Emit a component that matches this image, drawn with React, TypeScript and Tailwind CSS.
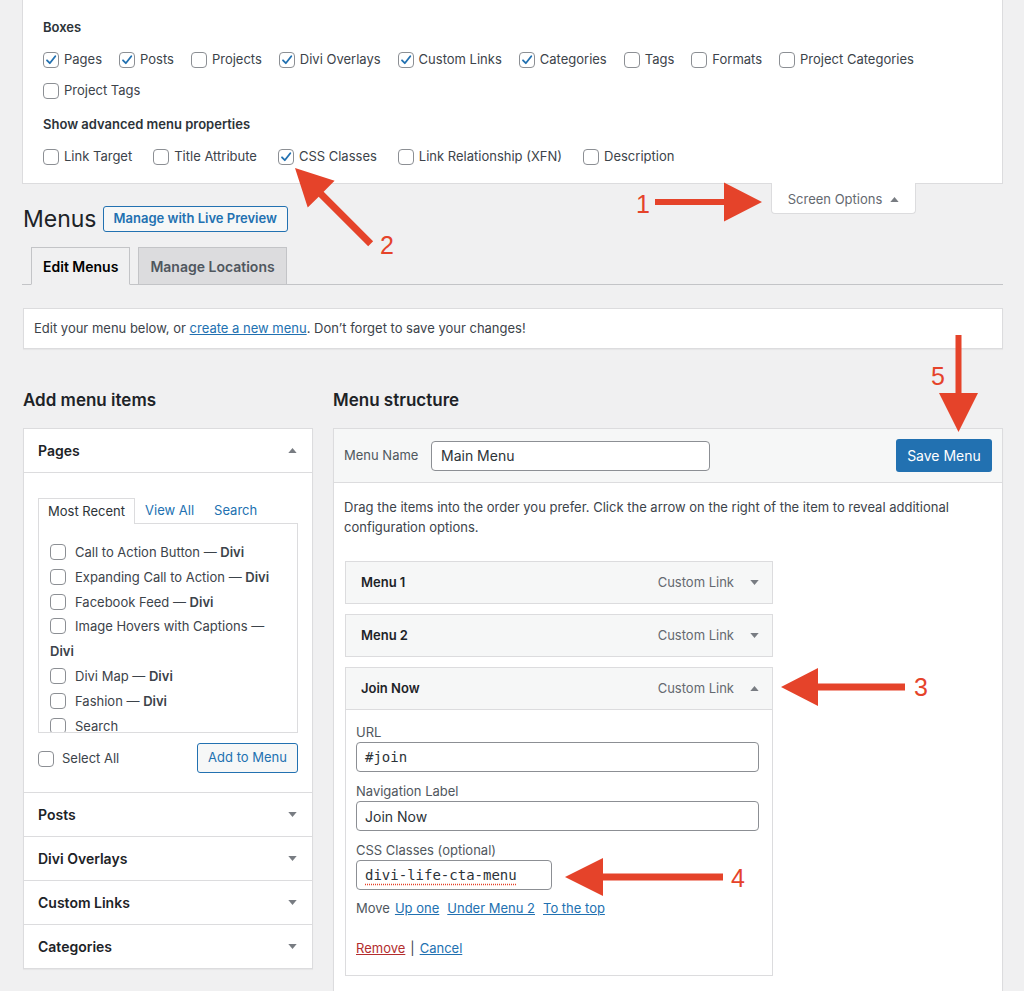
import React from 'react';

const boxesRow1: [string, boolean][] = [
  ['Pages', true],
  ['Posts', true],
  ['Projects', false],
  ['Divi Overlays', true],
  ['Custom Links', true],
  ['Categories', true],
  ['Tags', false],
  ['Formats', false],
  ['Project Categories', false],
];

const advanced: [string, boolean][] = [
  ['Link Target', false],
  ['Title Attribute', false],
  ['CSS Classes', true],
  ['Link Relationship (XFN)', false],
  ['Description', false],
];

const otherSections = ['Posts', 'Divi Overlays', 'Custom Links', 'Categories'];

function Check({ on = false }: { on?: boolean }) {
  return (
    <span className="inline-flex h-4 w-4 shrink-0 items-center justify-center rounded-[4px] border border-[#8c8f94] bg-white align-middle">
      {on && (
        <svg viewBox="0 0 14 14" className="h-[14px] w-[14px]">
          <path d="M3 7.3 5.8 10.2 11.3 3.2" fill="none" stroke="#2271b1" strokeWidth="1.8" strokeLinecap="round" strokeLinejoin="round" />
        </svg>
      )}
    </span>
  );
}

function Caret({ up = false }: { up?: boolean }) {
  return (
    <svg viewBox="0 0 10 6" className="h-[5px] w-[9px] shrink-0">
      <path d={up ? 'M0 6 5 0 10 6Z' : 'M0 0 5 6 10 0Z'} fill="#787c82" />
    </svg>
  );
}

function Option({ label, on }: { label: string; on: boolean }) {
  return (
    <label className="flex items-center gap-[5px] text-[13px] text-[#3c434a]">
      <Check on={on} />
      {label}
    </label>
  );
}

function MenuItemBar({ title, open = false }: { title: string; open?: boolean }) {
  return (
    <div className="flex h-[43px] items-center border border-[#dcdcde] bg-[#f6f7f7] pl-[15px] pr-[13px]">
      <span className="text-[13px] font-semibold text-[#1d2327]">{title}</span>
      <span className="ml-auto mr-[16px] text-[13px] text-[#646970]">Custom Link</span>
      <Caret up={open} />
    </div>
  );
}

function Annotations() {
  const red = '#e5432a';
  return (
    <>
      <svg className="pointer-events-none absolute left-0 top-0" width="1024" height="991" viewBox="0 0 1024 991">
        <g fill={red}>
          {/* 1 */}
          <polygon points="762,202 724,182.5 724,199 655,199 655,205 724,205 724,221.5" />
          {/* 2 */}
          <g transform="translate(295 168) rotate(45)">
            <polygon points="0,0 37,-19 37,-3.5 107,-3.5 107,3.5 37,3.5 37,19" />
          </g>
          {/* 5 */}
          <polygon points="958.5,432 939,393 955.5,393 955.5,335 961.5,335 961.5,393 978,393" />
          {/* 3 */}
          <polygon points="781,687 818,668 818,683.5 905,683.5 905,690.5 818,690.5 818,706" />
          {/* 4 */}
          <polygon points="565,877 603,858 603,873.5 723,873.5 723,880.5 603,880.5 603,896" />
        </g>
      </svg>
      <span className="pointer-events-none absolute left-[636px] top-[192px] text-[25px] leading-none text-[#e5432a] [font-family:'Liberation_Sans',Arial,sans-serif]">1</span>
      <span className="pointer-events-none absolute left-[380px] top-[233px] text-[25px] leading-none text-[#e5432a] [font-family:'Liberation_Sans',Arial,sans-serif]">2</span>
      <span className="pointer-events-none absolute left-[931px] top-[364px] text-[25px] leading-none text-[#e5432a] [font-family:'Liberation_Sans',Arial,sans-serif]">5</span>
      <span className="pointer-events-none absolute left-[914px] top-[675px] text-[25px] leading-none text-[#e5432a] [font-family:'Liberation_Sans',Arial,sans-serif]">3</span>
      <span className="pointer-events-none absolute left-[731px] top-[866px] text-[25px] leading-none text-[#e5432a] [font-family:'Liberation_Sans',Arial,sans-serif]">4</span>
    </>
  );
}

export default function App() {
  return (
    <div className="relative min-h-[991px] overflow-hidden bg-[#f0f0f1] text-[#3c434a] [font-family:Inter,'Liberation_Sans',sans-serif]">
      <div className="ml-[22px] w-[981px] pb-[40px]">
        {/* Screen options panel */}
        <div className="h-[184px] border-x border-b border-[#dcdcde] bg-white pl-[20px] pt-[17px]">
          <div className="h-[20px] text-[13px] font-semibold leading-[20px] text-[#2c3338]">Boxes</div>
          <div className="mt-[13px] flex h-[20px] gap-x-[17px]">
            {boxesRow1.map(([l, on]) => (
              <Option key={l} label={l} on={on} />
            ))}
          </div>
          <div className="mt-[11px] flex h-[20px]">
            <Option label="Project Tags" on={false} />
          </div>
          <div className="mt-[13px] h-[20px] text-[13px] font-semibold leading-[20px] text-[#2c3338]">
            Show advanced menu properties
          </div>
          <div className="mt-[13px] flex h-[20px] gap-x-[21px]">
            {advanced.map(([l, on]) => (
              <Option key={l} label={l} on={on} />
            ))}
          </div>
        </div>

        {/* Screen options tab */}
        <div className="flex justify-end pr-[87px]">
          <div className="-mt-px flex h-[31px] w-[145px] items-center justify-center gap-[8px] rounded-b-[4px] border-x border-b border-[#dcdcde] bg-white pt-[3px] text-[13px] text-[#646970]">
            Screen Options
            <Caret up />
          </div>
        </div>

        {/* Heading */}
        <div className="-mt-[8px] flex h-[26px] items-center pl-px">
          <h1 className="text-[23px] font-normal leading-[26px] text-[#1d2327]">Menus</h1>
          <div className="ml-[6px] flex h-[26px] items-center rounded-[3px] border border-[#2271b1] bg-[#f6f7f7] px-[10px] text-[13px] font-semibold text-[#2271b1]">
            Manage with Live Preview
          </div>
        </div>

        {/* Nav tabs */}
        <div className="mt-[15px] flex gap-[8px] border-b border-[#c3c4c7] pl-[9px]">
          <div className="-mb-px flex h-[38px] items-center border border-[#c3c4c7] border-b-[#f0f0f1] bg-[#f0f0f1] px-[11px] text-[14px] font-semibold text-[#000]">
            Edit Menus
          </div>
          <div className="-mb-px flex h-[38px] items-center border border-[#c3c4c7] bg-[#dcdcde] px-[11px] text-[14px] font-semibold text-[#50575e]">
            Manage Locations
          </div>
        </div>

        {/* Notice */}
        <div className="ml-px mt-[23px] flex h-[41px] items-center border border-[#dcdcde] bg-white pl-[10px] pt-px text-[13px] text-[#3c434a] shadow-[0_1px_1px_rgba(0,0,0,0.04)]">
          <span>
            Edit your menu below, or{' '}
            <a className="text-[#2271b1] underline">create a new menu</a>. Don’t forget to save your changes!
          </span>
        </div>

        {/* Columns */}
        <div className="ml-px mt-[40px] flex gap-[20px]">
          {/* Left column */}
          <div className="w-[290px] shrink-0">
            <h2 className="h-[22px] text-[17px] font-semibold leading-[22px] text-[#1d2327]">Add menu items</h2>
            <div className="mt-[17px] border border-[#dcdcde] bg-white shadow-[0_1px_1px_rgba(0,0,0,0.04)]">
              <div className="flex h-[44px] items-center justify-between border-b border-[#dcdcde] pl-[14px] pr-[15px]">
                <span className="text-[14px] font-semibold text-[#1d2327]">Pages</span>
                <Caret up />
              </div>
              <div className="px-[14px] pb-[19px] pt-[25px]">
                <div className="flex h-[25px] text-[13px]">
                  <div className="relative z-10 flex h-[26px] items-center border-x border-t border-[#dcdcde] bg-white px-[9px] text-[#2c3338]">
                    Most Recent
                  </div>
                  <div className="flex h-[26px] items-center px-[10px] text-[#2271b1]">View All</div>
                  <div className="flex h-[26px] items-center px-[10px] text-[#2271b1]">Search</div>
                </div>
                <div className="h-[210px] overflow-hidden border border-[#dcdcde] bg-white pl-[11px] pr-[10px] pt-[16px]">
                  <div className="text-[13px] leading-[24.8px] text-[#3c434a]">
                    <div>
                      <span className="mr-[9px] inline-flex align-[-3px]"><Check /></span>
                      Call to Action Button — <b className="font-semibold">Divi</b>
                    </div>
                    <div>
                      <span className="mr-[9px] inline-flex align-[-3px]"><Check /></span>
                      Expanding Call to Action — <b className="font-semibold">Divi</b>
                    </div>
                    <div>
                      <span className="mr-[9px] inline-flex align-[-3px]"><Check /></span>
                      Facebook Feed — <b className="font-semibold">Divi</b>
                    </div>
                    <div>
                      <span className="mr-[9px] inline-flex align-[-3px]"><Check /></span>
                      Image Hovers with Captions —
                      <br />
                      <b className="font-semibold">Divi</b>
                    </div>
                    <div>
                      <span className="mr-[9px] inline-flex align-[-3px]"><Check /></span>
                      Divi Map — <b className="font-semibold">Divi</b>
                    </div>
                    <div>
                      <span className="mr-[9px] inline-flex align-[-3px]"><Check /></span>
                      Fashion — <b className="font-semibold">Divi</b>
                    </div>
                    <div>
                      <span className="mr-[9px] inline-flex align-[-3px]"><Check /></span>
                      Search
                    </div>
                  </div>
                </div>
                <div className="mt-[10px] flex h-[30px] items-center justify-between">
                  <label className="flex items-center gap-[8px] pt-px text-[13px] text-[#3c434a]">
                    <Check />
                    Select All
                  </label>
                  <div className="flex h-[30px] w-[101px] items-center justify-center rounded-[3px] border border-[#2271b1] bg-[#f6f7f7] text-[13px] text-[#2271b1]">
                    Add to Menu
                  </div>
                </div>
              </div>
              {otherSections.map((s) => (
                <div key={s} className="flex h-[44px] items-center justify-between border-t border-[#dcdcde] pl-[14px] pr-[15px]">
                  <span className="text-[14px] font-semibold text-[#1d2327]">{s}</span>
                  <Caret />
                </div>
              ))}
            </div>
          </div>

          {/* Right column */}
          <div className="flex-1">
            <h2 className="h-[22px] text-[17px] font-semibold leading-[22px] text-[#1d2327]">Menu structure</h2>
            <div className="mt-[17px] border border-[#dcdcde] bg-white shadow-[0_1px_1px_rgba(0,0,0,0.04)]">
              <div className="flex h-[54px] items-center border-b border-[#dcdcde] bg-[#f6f7f7] px-[10px]">
                <span className="w-[87px] text-[13px] text-[#50575e]">Menu Name</span>
                <div className="flex h-[30px] w-[279px] items-center rounded-[4px] border border-[#8c8f94] bg-white px-[9px] text-[14px] text-[#2c3338]">
                  Main Menu
                </div>
                <div className="ml-auto flex h-[33px] w-[96px] items-center justify-center rounded-[3px] bg-[#2271b1] text-[14px] text-white">
                  Save Menu
                </div>
              </div>
              <div className="px-[10px] pb-[40px] pt-[14px]">
                <p className="text-[13px] leading-[20px] text-[#3c434a]">
                  Drag the items into the order you prefer. Click the arrow on the right of the item to reveal additional
                  <br />
                  configuration options.
                </p>
                <div className="ml-px mt-[24px] flex w-[428px] flex-col gap-[10px]">
                  <MenuItemBar title="Menu 1" />
                  <MenuItemBar title="Menu 2" />
                  <div>
                    <MenuItemBar title="Join Now" open />
                    <div className="border-x border-b border-[#dcdcde] bg-white pb-[16px] pl-[10px] pr-[13px] pt-[12px]">
                      <div className="h-[20px] text-[13px] leading-[20px] text-[#50575e]">URL</div>
                      <div className="flex h-[30px] items-center rounded-[4px] border border-[#8c8f94] bg-white px-[8px] text-[14px] text-[#2c3338] [font-family:'DejaVu_Sans_Mono',monospace]">
                        #join
                      </div>
                      <div className="mt-[9px] h-[20px] text-[13px] leading-[20px] text-[#50575e]">Navigation Label</div>
                      <div className="flex h-[30px] items-center rounded-[4px] border border-[#8c8f94] bg-white px-[8px] text-[14px] text-[#2c3338]">
                        Join Now
                      </div>
                      <div className="mt-[9px] h-[20px] text-[13px] leading-[20px] text-[#50575e]">CSS Classes (optional)</div>
                      <div className="flex h-[30px] w-[196px] items-center rounded-[4px] border border-[#8c8f94] bg-white px-[8px] text-[14px] text-[#2c3338] [font-family:'DejaVu_Sans_Mono',monospace]">
                        <span className="underline decoration-[#e5432a] decoration-dotted underline-offset-[4px]">divi-life-cta-menu</span>
                      </div>
                      <div className="mt-[9px] flex h-[20px] items-center gap-[8px] text-[13px]">
                        <span className="mr-[-3px] text-[#50575e]">Move</span>
                        <a className="text-[#2271b1] underline">Up one</a>
                        <a className="text-[#2271b1] underline">Under Menu 2</a>
                        <a className="text-[#2271b1] underline">To the top</a>
                      </div>
                      <div className="mt-[20px] flex h-[20px] items-center text-[13px]">
                        <a className="text-[#b32d2e] underline">Remove</a>
                        <span className="mx-[5px] text-[#3c434a]">|</span>
                        <a className="text-[#2271b1] underline">Cancel</a>
                      </div>
                    </div>
                  </div>
                </div>
              </div>
            </div>
          </div>
        </div>
      </div>
      <Annotations />
    </div>
  );
}
